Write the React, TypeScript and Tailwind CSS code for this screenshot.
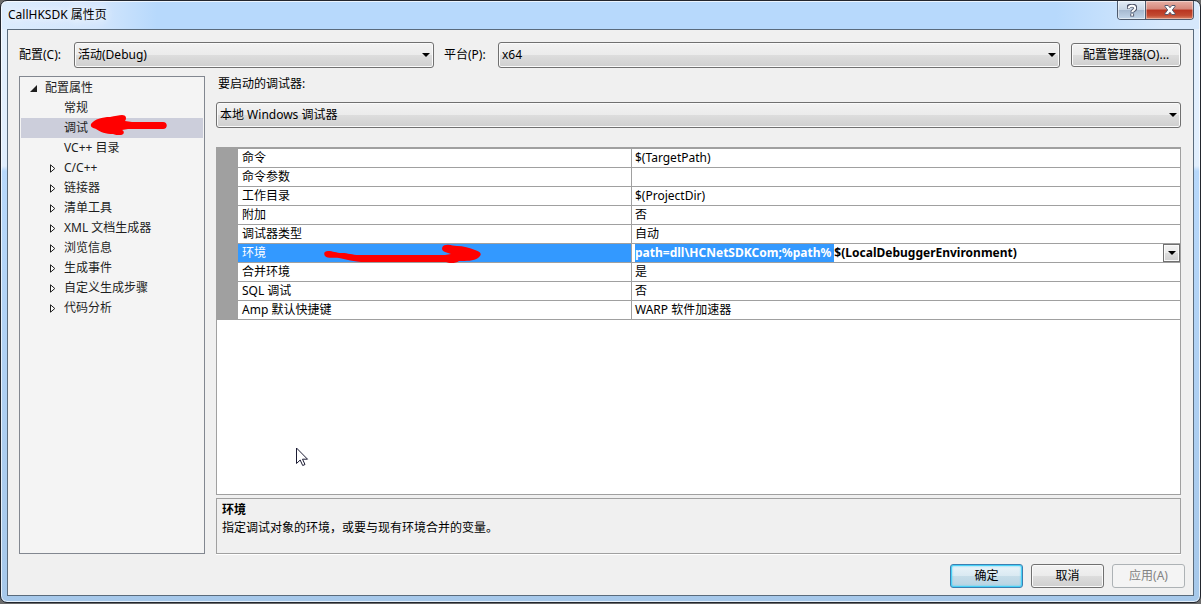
import { useEffect, useRef, type ReactNode } from 'react'

const treeItems = [
  { label: '常规', expandable: false },
  { label: '调试', expandable: false, selected: true },
  { label: 'VC++ 目录', expandable: false },
  { label: 'C/C++', expandable: true },
  { label: '链接器', expandable: true },
  { label: '清单工具', expandable: true },
  { label: 'XML 文档生成器', expandable: true },
  { label: '浏览信息', expandable: true },
  { label: '生成事件', expandable: true },
  { label: '自定义生成步骤', expandable: true },
  { label: '代码分析', expandable: true },
]

const properties = [
  { name: '命令', value: '$(TargetPath)' },
  { name: '命令参数', value: '' },
  { name: '工作目录', value: '$(ProjectDir)' },
  { name: '附加', value: '否' },
  { name: '调试器类型', value: '自动' },
  { name: '环境', value: 'path=dll\\HCNetSDKCom;%path% $(LocalDebuggerEnvironment)', active: true },
  { name: '合并环境', value: '是' },
  { name: 'SQL 调试', value: '否' },
  { name: 'Amp 默认快捷键', value: 'WARP 软件加速器' },
]

const raised =
  'border-[#707070] bg-[linear-gradient(#f2f2f2,#ebebeb_50%,#dddddd_50%,#cfcfcf)] shadow-[inset_0_0_0_1px_#fafafa]'

function DownArrow({ className = '' }: { className?: string }) {
  return (
    <svg viewBox="0 0 8 4" className={`h-[4px] w-[8px] ${className}`} aria-hidden="true">
      <path d="M0 0h8L4 4z" fill="#000" />
    </svg>
  )
}

function Combo({ id, value, className = '' }: { id: string; value: string; className?: string }) {
  return (
    <div className={`relative ${className}`}>
      <select
        id={id}
        defaultValue={value}
        className={`block h-[26px] w-full appearance-none rounded-[3px] border pr-6 pl-[3px] text-black outline-none ${raised}`}
      >
        <option>{value}</option>
      </select>
      <DownArrow className="pointer-events-none absolute top-[11px] right-1" />
    </div>
  )
}

function DialogButton({ children, className, disabled }: { children: ReactNode; className: string; disabled?: boolean }) {
  return (
    <button type="button" disabled={disabled} className={`h-6 rounded-[3px] border ${className}`}>
      {children}
    </button>
  )
}

function EnvironmentInput({ value }: { value: string }) {
  const ref = useRef<HTMLInputElement>(null)

  useEffect(() => {
    ref.current?.focus()
    ref.current?.setSelectionRange(0, value.indexOf('$'))
  }, [value])

  return (
    <div className="flex h-[18px] items-stretch">
      <input
        ref={ref}
        aria-label="环境"
        defaultValue={value}
        spellCheck={false}
        className="min-w-0 flex-1 font-bold outline-none selection:bg-[#3399ff] selection:text-white"
      />
      <button
        type="button"
        aria-label="展开"
        className={`flex w-[17px] items-center justify-center border ${raised}`}
      >
        <DownArrow />
      </button>
    </div>
  )
}

function TitleBar() {
  return (
    <header className="flex h-7 items-start justify-between">
      <h1 className="mt-1 pl-px leading-5 [text-shadow:0_0_8px_#fff,0_0_12px_#fff]">CallHKSDK 属性页</h1>
      <div className="flex h-[19px] overflow-hidden rounded-b-[4px] border border-t-0 border-[#4d5a6d]">
        <button
          type="button"
          aria-label="帮助"
          className="flex w-7 items-center justify-center border-r border-[#4d5a6d] bg-[linear-gradient(#e3ecf6,#c6d4e4_50%,#a5b8cf_50%,#c3d6ea)] shadow-[inset_0_0_0_1px_rgba(255,255,255,0.5)]"
        >
          <svg viewBox="0 0 10 13" className="h-[13px] w-[10px]" fill="none" aria-hidden="true">
            <path d="M1 5V4c0-2 2-2.500 4-2.500S8.500 2.300 8.500 4.200C8.500 6.200 5.200 6.200 5.200 8.500M5.200 9.500v3" stroke="#50566b" strokeWidth="3.800" />
            <path d="M1.600 4.500c0-2 1.600-2.700 3.400-2.700s3.200.8 3.200 2.500C8.200 6.300 5.200 6.300 5.200 8M5.200 9.700v2" stroke="#fff" strokeWidth="1.900" />
          </svg>
        </button>
        <button
          type="button"
          aria-label="关闭"
          className="flex w-[47px] items-center justify-center bg-[linear-gradient(#e8b0a6,#d5877a_45%,#b93420_50%,#c24a31_80%,#dc8568)] shadow-[inset_0_0_0_1px_rgba(255,255,255,0.4)]"
        >
          <svg viewBox="0 0 12 10" className="h-[10px] w-3" aria-hidden="true">
            <path
              d="M1 .5h3.200L6 2.700 7.800.5H11v1L8.300 5l2.700 3.500v1H7.800L6 7.300 4.200 9.500H1v-1L3.700 5 1 1.500z"
              fill="#fff"
              stroke="#54596e"
              strokeWidth="1"
            />
          </svg>
        </button>
      </div>
    </header>
  )
}

function CategoryTree() {
  return (
    <nav className="w-[186px] shrink-0 border border-[#828790] bg-[#f4f4f4] px-px pt-px text-[#1e1e1e]">
      <button type="button" className="flex h-5 w-full items-center gap-2 pl-[9px]">
        <svg viewBox="0 0 7 7" className="h-[7px] w-[7px]" aria-hidden="true">
          <path d="M7 0v7H0z" fill="#1e1e1e" />
        </svg>
        配置属性
      </button>
      <ul>
        {treeItems.map((item) => (
          <li key={item.label} className="relative">
            <button
              type="button"
              className={`flex h-5 w-full items-center gap-2 pl-7 text-left ${item.selected ? 'bg-[#cccedb]' : ''}`}
            >
              <svg viewBox="0 0 7 9" className="h-[9px] w-[7px]" aria-hidden="true">
                {item.expandable && <path d="M1.500.8v7.400L5.800 4.500z" fill="#fff" stroke="#1e1e1e" />}
              </svg>
              {item.label}
            </button>
            {item.selected && (
              <svg viewBox="0 0 78 22" className="absolute -top-1 left-[69px] h-[22px] w-[78px]" aria-hidden="true">
                <path
                  d="M1 10C5 5 12 3 20 3c5-1 9-2 12-2 4 0 5 3 3 6l7 1 31 0c5 0 5 7 0 7l-35 0-6 1c3 1 2 5-1 5-4 0-6 0-8-1-7 0-13-2-17-5C3 14 0 13 1 10z"
                  fill="#f00"
                />
              </svg>
            )}
          </li>
        ))}
      </ul>
    </nav>
  )
}

function PropertyGrid() {
  return (
    <div className="relative min-h-[340px] flex-1 border border-t-2 border-[#a0a0a0] bg-white">
      <table className="w-full table-fixed border-separate border-spacing-0">
        <colgroup>
          <col className="w-[21px]" />
          <col className="w-[394px]" />
          <col />
        </colgroup>
        <tbody>
          {properties.map((p) => (
            <tr key={p.name} className="h-[19px]">
              <td className="bg-[#a0a0a0] p-0" />
              <th
                scope="row"
                className={`relative border-r border-b border-[#a0a0a0] py-0 pr-0 pl-1 text-left font-normal ${p.active ? 'bg-[#3399ff] text-white' : ''}`}
              >
                {p.name}
                {p.active && (
                  <svg viewBox="0 0 160 20" className="absolute top-0 left-[85px] h-5 w-40" aria-hidden="true">
                    <path
                      d="M5 7c5 0 8 2 14 2 6 0 10 2 17 2h86l6-1-6-2c-5-2-3-7 1-7 4-1 7 1 11 1 6 0 13 2 18 4 7 2 7 5 3 8-4 3-12 3-19 3-4 3-11 2-13 1H38c-12-1-15-3-22-4-5-1-11 1-14-2-2-3 0-5 3-5z"
                      fill="#f00"
                    />
                  </svg>
                )}
              </th>
              <td className="border-b border-[#a0a0a0] py-0 pr-0 pl-[3px]">
                {p.active ? <EnvironmentInput value={p.value} /> : p.value}
              </td>
            </tr>
          ))}
        </tbody>
      </table>

      {/* mouse pointer */}
      <svg viewBox="0 0 13 20" className="absolute top-[298px] left-[79px] h-5 w-[13px]" aria-hidden="true">
        <path d="M.5 1v15.500l3.700-3.500 2.500 5.500 2.300-1-2.500-5.300h5z" fill="#fff" stroke="#1b1b33" />
      </svg>
    </div>
  )
}

export default function App() {
  return (
    <div className="flex min-h-screen flex-col bg-[#6b6b6b] pb-px text-[12px] leading-[18px] text-black [font-family:'Noto_Sans','Noto_Sans_CJK_SC',sans-serif]">
      <div className="flex flex-1 flex-col rounded-[7px] border border-[#22262e] bg-[linear-gradient(90deg,#dcecfd,#d3e6fc_8%,#b7d9fc_13%,#b7d9fc_88%,#d6e8fc_97%),linear-gradient(#e4f0fd,#e0eefd_165px,#b7d8fb_170px,#a6c8ea)] bg-[length:100%_28px,100%_100%] bg-no-repeat px-[6px] pb-[6px] shadow-[inset_0_0_0_1px_rgba(255,255,255,0.7)]">
        <TitleBar />
        <main className="flex flex-1 flex-col border border-[#5a6b7c] bg-[#f0f0f0] pt-3 pr-3 pb-[7px] pl-[11px]">
          <div className="flex items-center">
            <label htmlFor="configuration" className="w-[55px] shrink-0">
              配置(C):
            </label>
            <Combo id="configuration" value="活动(Debug)" className="w-[360px]" />
            <label htmlFor="platform" className="ml-[10px] w-[54px] shrink-0">
              平台(P):
            </label>
            <Combo id="platform" value="x64" className="min-w-0 flex-1" />
            <DialogButton className={`ml-[11px] w-[110px] ${raised}`}>配置管理器(O)...</DialogButton>
          </div>

          <div className="mt-2 flex flex-1 items-stretch gap-[11px]">
            <CategoryTree />
            <section className="flex min-w-0 flex-1 flex-col">
              <label htmlFor="debugger" className="pl-[2px] leading-4">
                要启动的调试器:
              </label>
              <Combo id="debugger" value="本地 Windows 调试器" className="mt-[10px] mb-[19px]" />
              <PropertyGrid />
              <div className="mt-[3px] h-14 border border-[#a0a0a0] px-[5px] pt-[2px] shadow-[0_1px_0_#fff]">
                <h2 className="font-bold">环境</h2>
                <p>指定调试对象的环境，或要与现有环境合并的变量。</p>
              </div>
            </section>
          </div>

          <footer className="-mr-1 mt-[10px] flex justify-end gap-2">
            <DialogButton className="w-[73px] border-[#3c7fb1] bg-[linear-gradient(#eaf4f9,#d9e9f2_50%,#c6dde9_50%,#b8d3e2)] shadow-[inset_0_0_0_1px_#48d1f7,inset_0_0_2px_1px_#48d1f7]">
              确定
            </DialogButton>
            <DialogButton className={`w-[73px] ${raised}`}>取消</DialogButton>
            <DialogButton disabled className="w-[73px] border-[#adb2b5] bg-[#f4f4f4] text-[#838383]">
              应用(A)
            </DialogButton>
          </footer>
        </main>
      </div>
    </div>
  )
}
